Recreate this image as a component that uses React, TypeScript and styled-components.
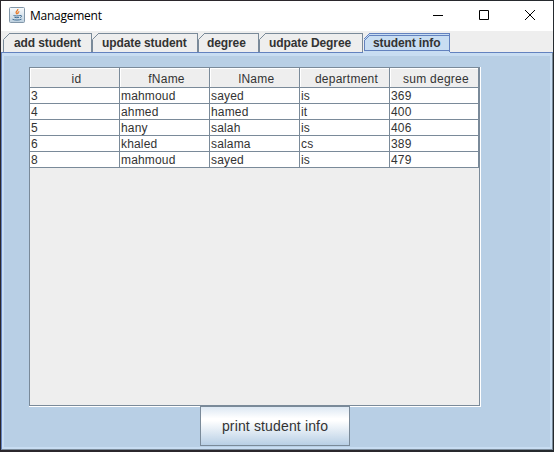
import React from "react";
import styled, { createGlobalStyle } from "styled-components";

const Global = createGlobalStyle`
  * { box-sizing: border-box; }
  body { margin: 0; overflow: hidden; font-family: "Liberation Sans", Arial, sans-serif; color: #333; }
`;

const Desktop = styled.div`
  width: 554px;
  height: 452px;
  padding: 1px 1px 2px;
  background: linear-gradient(90deg, #2b272c 0, #2b272c 60%, #252a2e 100%);
`;
const Frame = styled.div`
  display: flex;
  flex-direction: column;
  height: 449px;
  background: #eee;
`;
const TitleBar = styled.header`
  display: flex;
  align-items: center;
  height: 30px;
  padding: 0 0 2px 8px;
  background: #fff;
`;
const Title = styled.h1`
  flex: 1;
  margin: 0 0 0 5px;
  padding-top: 2px;
  font: 400 12px/16px "Open Sans", "Noto Sans", sans-serif;
  letter-spacing: -0.25px;
  color: #000;
`;
const WindowButton = styled.button`
  display: flex;
  align-items: center;
  justify-content: center;
  width: 46px;
  height: 28px;
  padding: 0;
  border: 0;
  background: none;
`;
const TabStrip = styled.nav`
  display: flex;
  height: 21px;
  padding: 2px 0 0 2px;
`;
const TabItem = styled.div<{ $width: number; $selected?: boolean }>`
  display: flex;
  width: ${(p) => p.$width}px;
  height: ${(p) => (p.$selected ? 20 : 19)}px;
  color: #333;
`;
const TabFace = styled.div<{ $selected?: boolean; $indent: number }>`
  flex: 1;
  height: 100%;
  padding-left: ${(p) => p.$indent}px;
  border-top: 1px solid ${(p) => (p.$selected ? "#6382bf" : "#7a8a99")};
  border-right: 1px solid ${(p) => (p.$selected ? "#6382bf" : "#7a8a99")};
  background: ${(p) => (p.$selected ? "#c8ddf2" : "#eee")};
  box-shadow: ${(p) => (p.$selected ? "inset 0 1px #c8ddf2, inset 0 2px #6382bf, inset 0 -2px #c8ddf2, inset 0 -3px #6382bf" : "none")};
  font-size: 12px;
  font-weight: 700;
  line-height: 18px;
  letter-spacing: -0.1px;
  white-space: nowrap;
`;
const Pane = styled.main`
  flex: 1;
  display: flex;
  flex-direction: column;
  padding: 11px 0 0 25px;
  border: solid #c8ddf2;
  border-width: 3px 2px 2px 2px;
  background: #b8cfe5;
`;
const PaneEdge = styled.div`
  flex: 1;
  display: flex;
  flex-direction: column;
  border: 1px solid #7a8a99;
  border-left-color: #6382bf;
  border-top: 0;
`;
const Rule = styled.div`
  display: flex;
  justify-content: space-between;
  height: 1px;
  background: #c8ddf2;
`;
const RuleLine = styled.i<{ $width: number }>`
  width: ${(p) => p.$width}px;
  background: #6382bf;
`;
const ScrollPane = styled.div`
  width: 452px;
  height: 340px;
  border-right: 1px solid #fff;
  border-bottom: 1px solid #fff;
`;
const Viewport = styled.div`
  height: 339px;
  border: 1px solid #7a8a99;
  background: #eee;
`;
const Table = styled.div`
  display: grid;
  grid-template-columns: repeat(4, 90px) 89px;
  width: 449px;
`;
const Cell = styled.div`
  height: 16px;
  padding-left: 1px;
  border-right: 1px solid #7a8a99;
  border-bottom: 1px solid #7a8a99;
  background: #fff;
  font-size: 12px;
  line-height: 16px;
  letter-spacing: 0.16px;
  white-space: nowrap;
`;
const HeadCell = styled(Cell)`
  height: 20px;
  padding: 0 0 0 4px;
  background: #eee;
  box-shadow: inset 1px 1px #fff;
  line-height: 22px;
  letter-spacing: 0.25px;
  text-align: center;
`;
const PrintButton = styled.button`
  width: 150px;
  height: 40px;
  margin: -1px 0 0 171px;
  padding: 0;
  border: 1px solid #7a8a99;
  background: linear-gradient(#dde8f3 0%, #fff 30%, #fff 36%, #b8cfe5 100%);
  color: #333;
  font: 14px/38px "Liberation Sans", Arial, sans-serif;
  letter-spacing: 0.15px;
`;

type TabData = { label: string; width: number; indent: number; selected?: boolean };
const tabs: TabData[] = [
  { label: "add student", width: 89, indent: 5 },
  { label: "update student", width: 106, indent: 4 },
  { label: "degree", width: 61, indent: 3 },
  { label: "udpate Degree", width: 104, indent: 4 },
  { label: "student info", width: 87, indent: 3, selected: true },
];
const headings = ["id", "fName", "lName", "department", "sum degree"];
const students = [
  ["3", "mahmoud", "sayed", "is", "369"],
  ["4", "ahmed", "hamed", "it", "400"],
  ["5", "hany", "salah", "is", "406"],
  ["6", "khaled", "salama", "cs", "389"],
  ["8", "mahmoud", "sayed", "is", "479"],
];

function JavaIcon() {
  return (
    <svg width="16" height="16" viewBox="0 0 16 16">
      <defs>
        <linearGradient id="tile" x2="0" y2="1">
          <stop stopColor="#fafcfd" />
          <stop offset="1" stopColor="#bdd0df" />
        </linearGradient>
      </defs>
      <rect x=".5" y=".5" width="15" height="15" rx="1" fill="url(#tile)" stroke="#8297a9" />
      <path d="M8.7 2c.9 1.7-2.6 2.2-1.5 4 .3.5.7.8.9 1.3M10.3 4.5C8.8 5.2 8.5 5.8 9 7" fill="none" stroke="#e87a28" strokeWidth="1.3" />
      <path d="M4.5 8.5c1.4.6 4.6.6 6.3 0M5.5 10.4c1.4.4 3.4.4 4.6 0M3.5 12.3c2 1 7 1 9-.1M11 8.6c2.2-.7 2 1.5.1 2" fill="none" stroke="#426f95" strokeWidth="1" />
    </svg>
  );
}

function Tab({ label, width, indent, selected }: TabData) {
  return (
    <TabItem $width={width} $selected={selected}>
      {selected ? (
        <svg width="7" height="20" shapeRendering="crispEdges">
          <path d="M1 20V6L7 0V20Z" fill="#c8ddf2" />
          <path d="M1.5 17.5V7.5L7 2M1 17.5H7" fill="none" stroke="#6382bf" />
          <path d="M.5 6.5L6.5.5" fill="none" stroke="#6382bf" />
        </svg>
      ) : (
        <svg width="6" height="19">
          <path d="M.5 19V6.5L6.5.5" fill="none" stroke="#7a8a99" />
        </svg>
      )}
      <TabFace $selected={selected} $indent={indent}>{label}</TabFace>
    </TabItem>
  );
}

export default function App() {
  return (
    <>
      <Global />
      <Desktop>
        <Frame>
          <TitleBar>
            <JavaIcon />
            <Title>Management</Title>
            <WindowButton aria-label="Minimize">
              <svg width="10" height="10"><path d="M0 5.5H10" stroke="#000" /></svg>
            </WindowButton>
            <WindowButton aria-label="Maximize">
              <svg width="10" height="10"><path d="M.5.5H9.5V9.5H.5Z" fill="none" stroke="#000" /></svg>
            </WindowButton>
            <WindowButton aria-label="Close">
              <svg width="10" height="10"><path d="M0 0L10 10M10 0L0 10" stroke="#000" /></svg>
            </WindowButton>
          </TitleBar>
          <TabStrip>
            {tabs.map((t) => <Tab key={t.label} {...t} />)}
          </TabStrip>
          <Rule><RuleLine $width={362} /><RuleLine $width={103} /></Rule>
          <PaneEdge>
            <Pane>
              <ScrollPane>
                <Viewport>
                  <Table>
                    {headings.map((h) => <HeadCell key={h}>{h}</HeadCell>)}
                    {students.flatMap((row) => row.map((v, i) => <Cell key={row[0] + i}>{v}</Cell>))}
                  </Table>
                </Viewport>
              </ScrollPane>
              <PrintButton>print student info</PrintButton>
            </Pane>
          </PaneEdge>
        </Frame>
      </Desktop>
    </>
  );
}
